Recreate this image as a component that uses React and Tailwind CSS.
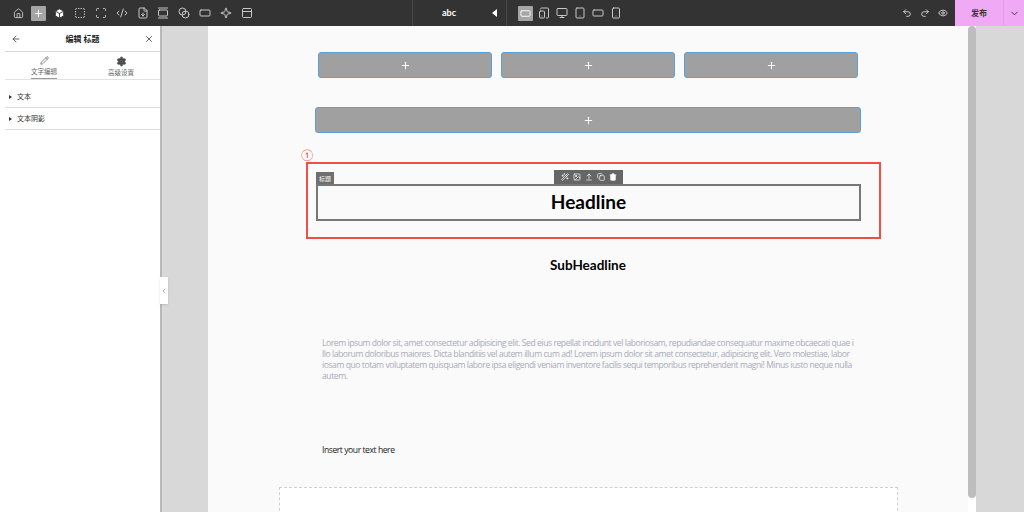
import {
  House, Plus, Box, SquareDashed, Scan, CodeXml, FileDown, GalleryVertical, Blend, RectangleHorizontal, Sparkle,
  PanelTop, Tablet, TabletSmartphone, Monitor, Smartphone, Undo2, Redo2, Eye, ChevronDown, ChevronLeft, ArrowLeft, X,
  Pencil, Settings, Image, ArrowUpFromLine, Copy, Trash2, Wand2
} from "lucide-react";

const leftIcons = [SquareDashed, Scan, CodeXml, FileDown, GalleryVertical, Blend, RectangleHorizontal, Sparkle, PanelTop];
const deviceIcons = [TabletSmartphone, Monitor, Tablet, RectangleHorizontal, Smartphone];

function TopBar() {
  return (
    <div className="flex h-[26px] shrink-0 items-center bg-[#333333] text-[#c8c8c8]">
      <div className="flex w-[412px] items-center pl-[8px]">
        <div className="flex w-[20px] justify-center"><House size={11} /></div>
        <div className="ml-[3px] mr-[1px] flex h-[15px] w-[15px] items-center justify-center rounded-[1px] bg-[#a5a5a5] text-white"><Plus size={11} /></div>
        <div className="ml-[2px] flex w-[20.8px] justify-center text-white"><Box size={11} fill="#ffffff" stroke="#333333" /></div>
        {leftIcons.map((Icon, i) => (
          <div key={i} className="flex w-[20.8px] justify-center"><Icon size={12} /></div>
        ))}
      </div>
      <div className="flex h-full w-[95px] items-center border-x border-[#4a4a4a] pl-[29px] pr-[9px]">
        <span className="text-[9px] font-bold text-white">abc</span>
        <span className="ml-auto h-0 w-0 border-y-[4px] border-r-[5px] border-y-transparent border-r-white" />
      </div>
      <div className="flex items-center pl-[11px]">
        <div className="flex h-[15px] w-[15px] items-center justify-center rounded-[1px] bg-[#a5a5a5] text-white"><RectangleHorizontal size={11} /></div>
        {deviceIcons.map((Icon, i) => (
          <div key={i} className="ml-[3.2px] flex w-[15px] justify-center"><Icon size={12} /></div>
        ))}
      </div>
      <div className="ml-auto flex h-full items-center text-[#e0e0e0]">
        <Undo2 size={10} />
        <Redo2 size={10} className="ml-[8px]" />
        <Eye size={10} className="ml-[8px]" />
        <div className="ml-[7px] flex h-full w-[48px] items-center justify-center bg-[#f0aaf5] text-[8px] font-bold text-[#333333]">发布</div>
        <div className="flex h-full w-[21px] items-center justify-center border-l border-[#e89cee] bg-[#f0aaf5] text-[#333333]"><ChevronDown size={11} /></div>
      </div>
    </div>
  );
}

function Section({ label }) {
  return (
    <div className="flex h-[22px] items-center border-b border-[#dddddd] pl-[4px] text-[7px] text-[#333333]">
      <span className="h-0 w-0 border-y-[2px] border-l-[3px] border-y-transparent border-l-[#333333]" />
      <span className="ml-[5px]">{label}</span>
    </div>
  );
}

function Sidebar() {
  return (
    <div className="relative flex w-[162px] shrink-0 flex-col border-r-2 border-[#b8b8b8] bg-white pl-[5px]">
      <div className="flex h-[26px] items-center justify-between border-b border-[#d8d8d8] px-[6px] text-[#444444]">
        <ArrowLeft size={10} />
        <span className="text-[8px] font-bold text-[#222222]">编辑 标题</span>
        <X size={10} />
      </div>
      <div className="flex h-[28px] border-b border-[#e2e2e2] text-[6.5px] text-[#666666]">
        <div className="ml-[26px] flex w-[26px] flex-col items-center border-b border-[#999999]">
          <Pencil size={9} className="mt-[4px]" />
          <span className="mt-[2px] whitespace-nowrap">文字编辑</span>
        </div>
        <div className="ml-[51px] flex w-[26px] flex-col items-center">
          <Settings size={11} className="mt-[4px]" fill="#444444" />
          <span className="mt-[1px] whitespace-nowrap">高级设置</span>
        </div>
      </div>
      <div className="mt-[6px]">
        <Section label="文本" />
        <Section label="文本阴影" />
      </div>
      <div className="absolute left-[160px] top-[251px] z-10 flex h-[27px] w-[8px] items-center justify-center bg-white text-[#888888] shadow-sm">
        <ChevronLeft size={8} />
      </div>
    </div>
  );
}

function Slot({ className }) {
  return (
    <div className={`flex h-[26px] items-center justify-center rounded-[3px] border border-[#5a9fd8] bg-[#a0a0a0] text-white ${className}`}>
      <Plus size={11} strokeWidth={2.2} />
    </div>
  );
}

function Canvas() {
  return (
    <div className="flex min-w-0 flex-1 bg-[#d8d8d8] pl-[46px] pr-[48px]">
      <div className="relative flex-1 overflow-hidden bg-[#fafafa] pr-[8px]">
        <div className="px-[98px] pt-[26px]">
          <div className="flex justify-center gap-[9px]">
            <Slot className="w-[174px]" />
            <Slot className="w-[174px]" />
            <Slot className="w-[174px]" />
          </div>
          <div className="ml-[9px] mt-[29px] w-[546px]">
            <Slot className="w-full" />
          </div>
        </div>
        <div className="ml-[93px] mt-[15px] text-[11px] leading-[14px] text-[#ee5a50]">①</div>
        <div className="ml-[98px] h-[77px] w-[575px] border-2 border-[#ef4f47] pl-[8px] pr-[18px] pt-[6px]">
          <div className="flex h-[14px] items-end justify-between pr-[238px]">
            <span className="flex h-[12px] w-[18px] items-center justify-center bg-[#6f6f6f] text-[6px] text-white">标题</span>
            <div className="flex h-[14px] w-[69px] items-center justify-center gap-[4px] bg-[#666666] text-white">
              <Wand2 size={8} />
              <Image size={8} />
              <ArrowUpFromLine size={8} />
              <Copy size={8} />
              <Trash2 size={8} fill="#ffffff" />
            </div>
          </div>
          <div className="flex h-[37px] items-center justify-center border-2 border-[#777777] text-[19px] font-bold text-black">Headline</div>
        </div>
        <div className="mt-[16px] text-center text-[13.5px] font-bold leading-[20px] text-black">SubHeadline</div>
        <p className="ml-[114px] mt-[63px] whitespace-nowrap font-['Open_Sans',sans-serif] text-[8.6px] leading-[11px] tracking-[-0.45px] text-[#a8aab8]">
          Lorem ipsum dolor sit, amet consectetur adipisicing elit. Sed eius repellat incidunt vel laboriosam, repudiandae consequatur maxime obcaecati quae i<br />
          llo laborum doloribus maiores. Dicta blanditiis vel autem illum cum ad! Lorem ipsum dolor sit amet consectetur, adipisicing elit. Vero molestiae, labor<br />
          iosam quo totam voluptatem quisquam labore ipsa eligendi veniam inventore facilis sequi temporibus reprehenderit magni! Minus iusto neque nulla<br />
          autem.
        </p>
        <p className="ml-[114px] mt-[62px] font-['Open_Sans',sans-serif] text-[8.6px] leading-[12px] tracking-[-0.45px] text-[#222222]">Insert your text here</p>
        <div className="ml-[71px] mt-[31px] h-[60px] w-[619px] border border-dashed border-[#cfcfcf] bg-white" />
        <div className="absolute right-0 top-0 h-full w-[8px] bg-white">
          <div className="h-[472px] rounded-[4px] bg-[#bdbdbd]" />
        </div>
      </div>
    </div>
  );
}

export default function App() {
  return (
    <div className="flex h-[512px] w-[1024px] flex-col overflow-hidden font-['Lato','Noto_Sans_CJK_SC',sans-serif]">
      <TopBar />
      <div className="flex min-h-0 flex-1">
        <Sidebar />
        <Canvas />
      </div>
    </div>
  );
}
